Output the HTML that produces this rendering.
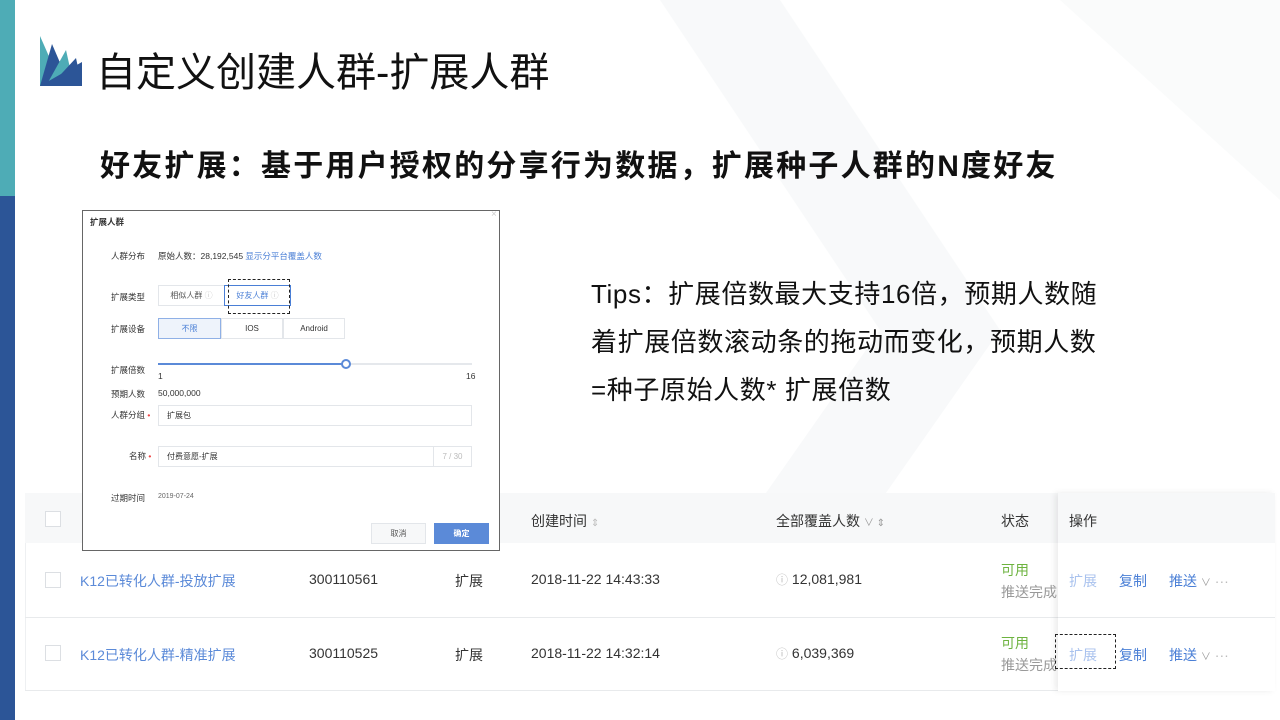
<!DOCTYPE html>
<html><head><meta charset="utf-8"><style>
*{margin:0;padding:0;box-sizing:border-box}
body{width:1280px;height:720px;position:relative;overflow:hidden;background:#fff;font-family:"Liberation Sans","Noto Sans CJK SC",sans-serif;color:#222}
.a{position:absolute;white-space:nowrap}
.bar1{left:0;top:0;width:15px;height:196px;background:#4eacb6}
.bar2{left:0;top:196px;width:15px;height:524px;background:#2c5597}
.blue{color:#4a7fd6}
.dlg{left:82px;top:210px;width:418px;height:341px;border:1px solid #666;background:#fff}
.lbl{font-size:8.5px;color:#333}
.box{position:absolute;border:1px solid #e3e6ea;background:#fff;font-size:8px;color:#333;text-align:center}
</style></head><body>
<svg class="a" style="left:0;top:0" width="1280" height="720"><polygon points="660,0 780,0 1000,330 880,330" fill="#f8f9fa"/><polygon points="880,330 1000,330 860,530 740,530" fill="#f8f9fa"/><polygon points="1060,0 1280,0 1280,200" fill="#fafbfb"/></svg>
<div class="a bar1"></div><div class="a bar2"></div>
<svg class="a" style="left:40px;top:36px" width="44" height="52"><polygon points="0,0 22,50 0,50" fill="#4eacb6"/><polygon points="0,50 12,8 30,50" fill="#2c5597"/><polygon points="6,50 26,14 34,50" fill="#4eacb6"/><polygon points="10,50 36,22 42,50" fill="#2c5597"/><polygon points="0,50 42,26 42,50" fill="#2c5597"/></svg>
<div class="a" style="left:96px;top:40px;font-size:40px;color:#111">自定义创建人群-扩展人群</div>
<div class="a" style="left:100px;top:141px;font-size:30px;font-weight:bold;color:#111;letter-spacing:2.2px">好友扩展：基于用户授权的分享行为数据，扩展种子人群的N度好友</div>
<div class="a" style="left:591px;top:270px;font-size:26px;line-height:48px;color:#111;white-space:normal;width:580px;letter-spacing:0.6px">Tips：扩展倍数最大支持16倍，预期人数随<br>着扩展倍数滚动条的拖动而变化，预期人数<br>=种子原始人数* 扩展倍数</div>

<!-- table -->
<div class="a" style="left:25px;top:493px;width:1250px;height:198px;border:1px solid #eef0f2;background:#fff"></div>
<div class="a" style="left:25px;top:493px;width:1250px;height:50px;background:#f7f8f9"></div>
<div class="a" style="left:25px;top:617px;width:1250px;height:1px;background:#e8eaec"></div>
<div class="a" style="left:25px;top:690px;width:1250px;height:1px;background:#e8eaec"></div>
<div class="a" style="left:1058px;top:493px;width:217px;height:198px;background:#fff;box-shadow:-3px 0 6px rgba(0,0,0,.08)"></div>
<div class="a" style="left:1058px;top:493px;width:217px;height:50px;background:#f7f8f9"></div>
<div class="a" style="left:1058px;top:617px;width:217px;height:1px;background:#e8eaec"></div>
<div class="a" style="left:45px;top:511px;width:16px;height:16px;border:1px solid #dcdfe3;background:#fff"></div>
<div class="a" style="left:45px;top:572px;width:16px;height:16px;border:1px solid #dcdfe3"></div>
<div class="a" style="left:45px;top:645px;width:16px;height:16px;border:1px solid #dcdfe3"></div>
<div class="a" style="left:531px;top:511px;font-size:14px;color:#333">创建时间 <span style="color:#bbb;font-size:10px">⇕</span></div>
<div class="a" style="left:776px;top:511px;font-size:14px;color:#333">全部覆盖人数 <span style="color:#999;font-size:10px">∨ ⇕</span></div>
<div class="a" style="left:1001px;top:511px;font-size:14px;color:#333">状态</div>
<div class="a" style="left:1069px;top:511px;font-size:14px;color:#333">操作</div>
<div class="a" style="left:80px;top:571px;font-size:14px;color:#5b8ad8">K12已转化人群-投放扩展</div>
<div class="a" style="left:80px;top:645px;font-size:14px;color:#5b8ad8">K12已转化人群-精准扩展</div>
<div class="a" style="left:309px;top:571px;font-size:14px;color:#333">300110561</div>
<div class="a" style="left:309px;top:645px;font-size:14px;color:#333">300110525</div>
<div class="a" style="left:455px;top:571px;font-size:14px;color:#333">扩展</div>
<div class="a" style="left:455px;top:645px;font-size:14px;color:#333">扩展</div>
<div class="a" style="left:531px;top:571px;font-size:14px;color:#333">2018-11-22 14:43:33</div>
<div class="a" style="left:531px;top:645px;font-size:14px;color:#333">2018-11-22 14:32:14</div>
<div class="a" style="left:776px;top:571px;font-size:14px;color:#333"><span style="color:#bbb;font-size:12px">ⓘ</span> 12,081,981</div>
<div class="a" style="left:776px;top:645px;font-size:14px;color:#333"><span style="color:#bbb;font-size:12px">ⓘ</span> 6,039,369</div>
<div class="a" style="left:1001px;top:559px;font-size:14px;line-height:22px;color:#999;width:57px;overflow:hidden"><span style="color:#6db33f">可用</span><br>推送完成</div>
<div class="a" style="left:1001px;top:632px;font-size:14px;line-height:22px;color:#999;width:57px;overflow:hidden"><span style="color:#6db33f">可用</span><br>推送完成</div>
<div class="a" style="left:1069px;top:571px;font-size:14px;color:#a9c2ee">扩展</div>
<div class="a" style="left:1119px;top:571px;font-size:14px;color:#4a7fd6">复制</div>
<div class="a" style="left:1169px;top:571px;font-size:14px;color:#4a7fd6">推送 <span style="font-size:10px;color:#999">∨</span> <span style="color:#bbb">···</span></div>
<div class="a" style="left:1069px;top:645px;font-size:14px;color:#a9c2ee">扩展</div>
<div class="a" style="left:1119px;top:645px;font-size:14px;color:#4a7fd6">复制</div>
<div class="a" style="left:1169px;top:645px;font-size:14px;color:#4a7fd6">推送 <span style="font-size:10px;color:#999">∨</span> <span style="color:#bbb">···</span></div>
<div class="a" style="left:1055px;top:634px;width:61px;height:35px;border:1px dashed #222"></div>

<!-- dialog -->
<div class="a dlg">
<div class="a lbl" style="left:7px;top:5px;font-weight:bold">扩展人群</div>
<div class="a" style="left:408px;top:-2px;font-size:10px;color:#ccc">×</div>
<div class="a lbl" style="left:28px;top:39px">人群分布</div>
<div class="a lbl" style="left:75px;top:39px">原始人数：28,192,545 <span class="blue">显示分平台覆盖人数</span></div>
<div class="a lbl" style="left:28px;top:80px">扩展类型</div>
<div class="box" style="left:75px;top:74px;width:67px;height:21px;line-height:19px;color:#555">相似人群 <span style="color:#ccc">ⓘ</span></div>
<div class="box" style="left:141px;top:74px;width:67px;height:21px;line-height:19px;color:#4a7fd6;border-color:#4a7fd6">好友人群 <span style="color:#ccc">ⓘ</span></div>
<div class="a" style="left:145px;top:68px;width:62px;height:35px;border:1px dashed #222"></div>
<div class="a lbl" style="left:28px;top:112px">扩展设备</div>
<div class="box" style="left:75px;top:107px;width:63px;height:21px;line-height:19px;color:#4a7fd6;border-color:#8fb0e6;background:#eef3fb">不限</div>
<div class="box" style="left:138px;top:107px;width:62px;height:21px;line-height:19px">IOS</div>
<div class="box" style="left:200px;top:107px;width:62px;height:21px;line-height:19px">Android</div>
<div class="a lbl" style="left:28px;top:153px">扩展倍数</div>
<div class="a" style="left:75px;top:152px;width:314px;height:2px;background:#e5e8ec"></div>
<div class="a" style="left:75px;top:152px;width:188px;height:2px;background:#5b8ad8"></div>
<div class="a" style="left:258px;top:148px;width:10px;height:10px;border-radius:50%;border:2px solid #5b8ad8;background:#fff"></div>
<div class="a lbl" style="left:75px;top:160px">1</div>
<div class="a lbl" style="left:383px;top:160px">16</div>
<div class="a lbl" style="left:28px;top:177px">预期人数</div>
<div class="a lbl" style="left:75px;top:177px">50,000,000</div>
<div class="a lbl" style="left:28px;top:198px">人群分组 <span style="color:#e44">•</span></div>
<div class="box" style="left:75px;top:194px;width:314px;height:21px;text-align:left;padding:4px 8px">扩展包</div>
<div class="a lbl" style="left:46px;top:239px">名称 <span style="color:#e44">•</span></div>
<div class="box" style="left:75px;top:235px;width:314px;height:21px;text-align:left;padding:4px 8px">付费意愿-扩展<span style="position:absolute;right:0;top:0;width:38px;height:19px;border-left:1px solid #e3e6ea;text-align:center;line-height:19px;color:#bbb">7 / 30</span></div>
<div class="a lbl" style="left:28px;top:281px">过期时间</div>
<div class="a" style="left:75px;top:282px;font-size:7px;color:#666">2019-07-24</div>
<div class="box" style="left:288px;top:312px;width:55px;height:21px;line-height:19px;background:#f7f8f9;color:#555">取消</div>
<div class="box" style="left:351px;top:312px;width:55px;height:21px;line-height:19px;background:#5b8ad8;border-color:#5b8ad8;color:#fff;font-weight:bold">确定</div>
</div>
</body></html>
